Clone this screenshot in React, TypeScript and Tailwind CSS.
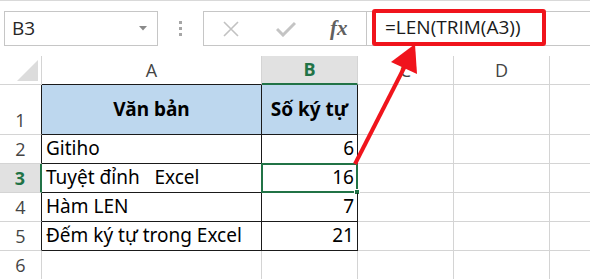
import React from 'react';

const CELL_FONT = { fontFamily: '"Noto Sans", "Liberation Sans", sans-serif' };
const UI_FONT = { fontFamily: '"Open Sans", "Noto Sans", sans-serif' };

type Row = { n: number; a: string; b: string; header?: boolean };

const rows: Row[] = [
  { n: 1, a: 'Văn bản', b: 'Số ký tự', header: true },
  { n: 2, a: 'Gitiho', b: '6' },
  { n: 3, a: 'Tuyệt đỉnh   Excel', b: '16' },
  { n: 4, a: 'Hàm LEN', b: '7' },
  { n: 5, a: 'Đếm ký tự trong Excel', b: '21' },
];

function Toolbar() {
  return (
    <div className="h-[56px] border-t border-[#d9d9d9] flex items-start pt-[10px]">
      {/* name box */}
      <div className="ml-[4px] w-[154px] h-[35px] border border-[#c6c6c6] flex items-center justify-between pl-[7px] pr-[10px]">
        <span className="text-[19px] text-[#262626]" style={UI_FONT}>B3</span>
        <svg width="8" height="5" viewBox="0 0 8 5">
          <path d="M0 0h8L4 4.5z" fill="#8a8a8a" />
        </svg>
      </div>
      {/* grip dots */}
      <div className="w-[45px] h-[35px] flex flex-col items-center justify-center gap-[3px]">
        <span className="w-[3px] h-[3px] bg-[#a6a6a6]" />
        <span className="w-[3px] h-[3px] bg-[#a6a6a6]" />
        <span className="w-[3px] h-[3px] bg-[#a6a6a6]" />
      </div>
      {/* cancel / enter / fx */}
      <div className="w-[164px] h-[35px] border border-[#c6c6c6] flex items-center pl-[18px]">
        <svg width="18" height="16" viewBox="0 0 18 16">
          <path d="M2 1l14 14M16 1L2 15" stroke="#c2c2c2" strokeWidth="1.6" fill="none" />
        </svg>
        <svg className="ml-[36px]" width="20" height="16" viewBox="0 0 20 16">
          <path d="M1 8l6 6L19 2" stroke="#c4c4c4" strokeWidth="3" fill="none" />
        </svg>
        <span
          className="ml-[34px] text-[21px] italic font-bold text-[#606060] leading-none"
          style={{ fontFamily: '"Liberation Serif", "DejaVu Serif", serif' }}
        >
          fx
        </span>
      </div>
      {/* formula input */}
      <div className="relative flex-1 h-[35px] border-y border-[#c6c6c6]">
        <div className="absolute left-[5px] -top-[3px] w-[174px] h-[37px] border-4 border-[#f0141c] rounded-[3px] flex items-center pl-[9px]">
          <span className="text-[19px] text-[#1a1a1a]" style={UI_FONT}>=LEN(TRIM(A3))</span>
        </div>
      </div>
    </div>
  );
}

function ColumnHeaders() {
  return (
    <div className="flex h-[29px]" style={UI_FONT}>
      <div className="w-[42px] border-r border-b border-[#d4d4d4] relative">
        <svg className="absolute left-[17px] top-[4px]" width="21" height="21" viewBox="0 0 21 21">
          <path d="M21 0V21H0z" fill="#dcdcdc" />
        </svg>
      </div>
      <div className="w-[220px] border-r border-[#d4d4d4] border-b border-b-[#1a1a1a] flex items-center justify-center text-[18px] text-[#444]">
        A
      </div>
      <div className="w-[96px] border-r border-[#d4d4d4] border-b-2 border-b-[#217346] bg-[#e1e1e1] flex items-center justify-center text-[18px] font-bold text-[#217346]">
        B
      </div>
      <div className="w-[96px] border-r border-b border-[#d4d4d4] flex items-center justify-center text-[18px] text-[#444]">
        C
      </div>
      <div className="w-[96px] border-r border-b border-[#d4d4d4] flex items-center justify-center text-[18px] text-[#444]">
        D
      </div>
      <div className="flex-1 border-b border-[#d4d4d4]" />
    </div>
  );
}

function DataRow({ row }: { row: Row }) {
  const selected = row.n === 3;
  return (
    <div className={`flex ${row.header ? 'h-[50px]' : 'h-[29px]'}`}>
      <div
        className={`w-[42px] border-b border-[#d4d4d4] flex items-end justify-center text-[18px] ${
          selected
            ? 'bg-[#e1e1e1] font-bold text-[#217346] border-r-2 border-r-[#217346]'
            : 'text-[#444] border-r border-r-[#1a1a1a]'
        }`}
        style={UI_FONT}
      >
        {row.n}
      </div>
      <div
        className={`w-[220px] border-r border-b border-[#1a1a1a] flex px-[4px] text-[19px] text-black ${
          row.header ? 'bg-[#bdd7ee] font-bold items-center justify-center' : 'items-end pb-[1px]'
        }`}
        style={CELL_FONT}
      >
        <span className="whitespace-pre">{row.a}</span>
      </div>
      <div
        className={`relative w-[96px] border-r border-b border-[#1a1a1a] flex px-[3px] text-[19px] text-black ${
          row.header ? 'bg-[#bdd7ee] font-bold items-center justify-center' : 'items-end justify-end pb-[1px]'
        }`}
        style={CELL_FONT}
      >
        <span>{row.b}</span>
        {selected && (
          <div className="absolute -left-[1px] -top-[1px] w-[97px] h-[30px] border-2 border-[#217346]">
            <div className="absolute -right-[4px] -bottom-[4px] w-[6px] h-[6px] bg-[#217346] border border-white" />
          </div>
        )}
      </div>
      <div className="w-[96px] border-r border-b border-[#d4d4d4]" />
      <div className="w-[96px] border-r border-b border-[#d4d4d4]" />
      <div className="flex-1 border-b border-[#d4d4d4]" />
    </div>
  );
}

function EmptyRow({ n }: { n: number }) {
  return (
    <div className="flex h-[29px]">
      <div
        className="w-[42px] border-r border-b border-[#d4d4d4] flex items-end justify-center text-[18px] text-[#444]"
        style={UI_FONT}
      >
        {n}
      </div>
      <div className="w-[220px] border-r border-b border-[#d4d4d4]" />
      <div className="w-[96px] border-r border-b border-[#d4d4d4]" />
      <div className="w-[96px] border-r border-b border-[#d4d4d4]" />
      <div className="w-[96px] border-r border-b border-[#d4d4d4]" />
      <div className="flex-1 border-b border-[#d4d4d4]" />
    </div>
  );
}

export default function App() {
  return (
    <div className="relative w-[590px] h-[279px] overflow-hidden bg-white">
      <Toolbar />
      <ColumnHeaders />
      {rows.map(r => (
        <DataRow key={r.n} row={r} />
      ))}
      <EmptyRow n={6} />

      {/* red annotation arrow */}
      <svg className="absolute left-0 top-0 pointer-events-none" width="590" height="279" viewBox="0 0 590 279">
        <line x1="355" y1="164" x2="405" y2="66" stroke="#f0141c" strokeWidth="4" />
        <polygon points="415,44 391,62 417,74" fill="#f0141c" />
      </svg>
    </div>
  );
}
